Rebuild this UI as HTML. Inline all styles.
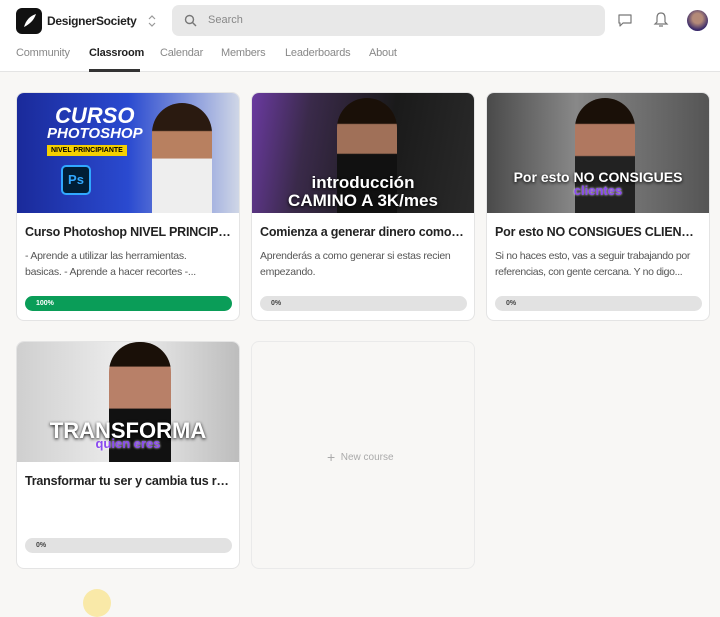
<!DOCTYPE html>
<html><head><meta charset="utf-8"><style>
*{box-sizing:border-box;margin:0;padding:0}
body{width:720px;height:598px;overflow:hidden;background:#f8f7f5;font-family:"Liberation Sans",Arial,sans-serif;position:relative}
.hdr{position:absolute;left:0;top:0;width:720px;height:72px;background:#fff;border-bottom:1px solid #e4e4e4}
.logo{position:absolute;left:16px;top:8px;width:26px;height:26px;background:#111;border-radius:6px}
.brand{position:absolute;left:47px;top:14px;font-size:12px;font-weight:bold;color:#222;letter-spacing:-0.3px}
.chev{position:absolute;left:147px;top:14px;width:10px;height:14px}
.search{position:absolute;left:172px;top:5px;width:433px;height:31px;background:#e8e8e8;border-radius:7px}
.search span{position:absolute;left:36px;top:9px;font-size:11px;color:#888}
.nav{position:absolute;top:47px;font-size:11px;color:#888;letter-spacing:-0.2px}
.nav.a{color:#222;font-weight:bold}
.ul{position:absolute;left:89px;top:69px;width:51px;height:3px;background:#333}
.card{position:absolute;width:224px;background:#fff;border:1px solid #e4e4e4;border-radius:8px;overflow:hidden}
.img{height:120px;position:relative;overflow:hidden}
.t{position:absolute;left:8px;top:132px;font-size:12.5px;font-weight:bold;color:#222;white-space:nowrap;width:206px;overflow:hidden;text-overflow:ellipsis;letter-spacing:-0.2px}
.d{position:absolute;left:8px;top:155px;font-size:10.5px;color:#555;line-height:16px;width:212px;letter-spacing:-0.25px;height:32px;overflow:hidden}
.bar{position:absolute;left:8px;top:196px;width:207px;height:15px;background:#e2e2e2;border-radius:8px;font-size:7px;font-weight:bold;color:#444;padding:4px 0 0 11px}
.bar.g{background:#0a9d58;color:#fff}
.big{position:absolute;color:#fff;font-weight:bold;text-align:center;width:100%;text-shadow:0 1px 3px #000}
</style></head><body>
<div class="hdr">
<div class="logo"><svg width="26" height="26"><path d="M8 19 C10 12 14 8 20 6 C18 12 14 16 8 19Z" fill="#fff"/></svg></div>
<div class="brand">DesignerSociety</div>
<svg class="chev" viewBox="0 0 10 14"><path d="M2 5l3-3 3 3M2 9l3 3 3-3" fill="none" stroke="#999" stroke-width="1.2"/></svg>
<div class="search"><svg style="position:absolute;left:12px;top:9px" width="13" height="13"><circle cx="5.5" cy="5.5" r="4" fill="none" stroke="#777" stroke-width="1.4"/><path d="M8.5 8.5 12 12" stroke="#777" stroke-width="1.4"/></svg><span>Search</span></div>
<svg style="position:absolute;left:617px;top:12px" width="16" height="16"><path d="M2 3h12v8H6l-3 3v-3H2z" fill="none" stroke="#777" stroke-width="1.2" stroke-linejoin="round"/></svg>
<svg style="position:absolute;left:653px;top:11px" width="16" height="18"><path d="M8 2c-3 0-4 2-4 5v4l-2 2h12l-2-2V7c0-3-1-5-4-5zM6 15h4" fill="none" stroke="#777" stroke-width="1.2"/></svg>
<div style="position:absolute;left:687px;top:10px;width:21px;height:21px;border-radius:50%;background:radial-gradient(circle at 50% 40%,#b48a78 30%,#3a2a6a 70%)"></div>
<div class="nav" style="left:16px">Community</div>
<div class="nav a" style="left:89px">Classroom</div>
<div class="nav" style="left:160px">Calendar</div>
<div class="nav" style="left:221px">Members</div>
<div class="nav" style="left:285px">Leaderboards</div>
<div class="nav" style="left:369px">About</div>
<div class="ul"></div>
</div>

<div class="card" style="left:16px;top:92px;height:229px">
<div class="img" style="background:linear-gradient(90deg,#1a2a9a,#2a4ad0 50%,#cfd6e6)">
<div style="position:absolute;left:38px;top:10px;color:#fff;font-weight:900;font-size:22px;font-style:italic">CURSO</div>
<div style="position:absolute;left:30px;top:32px;color:#fff;font-weight:900;font-size:15px;font-style:italic">PHOTOSHOP</div>
<div style="position:absolute;left:30px;top:52px;background:#f5d000;color:#000;font-size:7px;font-weight:bold;padding:2px 4px">NIVEL PRINCIPIANTE</div>
<div style="position:absolute;left:44px;top:72px;width:30px;height:30px;background:#001e36;border:2px solid #31a8ff;border-radius:5px;color:#31a8ff;font-weight:bold;font-size:13px;text-align:center;line-height:26px">Ps</div>
<div style="position:absolute;left:135px;top:10px;width:60px;height:110px;border-radius:30px 30px 0 0;background:linear-gradient(#2a1a10 25%,#b88060 26%,#b88060 50%,#eee 51%)"></div>
</div>
<div class="t">Curso Photoshop NIVEL PRINCIPIANTE</div>
<div class="d" style="width:195px">- Aprende a utilizar las herramientas. basicas. - Aprende a hacer recortes -...</div>
<div class="bar g" style="top:203px">100%</div>
</div>

<div class="card" style="left:251px;top:92px;height:229px">
<div class="img" style="background:linear-gradient(100deg,#6a3aa0,#3a2a4a 25%,#1a1a1a 60%,#2a2a2a)">
<div style="position:absolute;left:85px;top:5px;width:60px;height:115px;border-radius:30px 30px 0 0;background:linear-gradient(#1a1008 22%,#a07058 23%,#a07058 48%,#111 49%)"></div>
<div class="big" style="top:80px;font-size:17px">introducción</div>
<div class="big" style="top:98px;font-size:17px">CAMINO A 3K/mes</div>
</div>
<div class="t">Comienza a generar dinero como diseñador</div>
<div class="d">Aprenderás a como generar si estas recien empezando.</div>
<div class="bar" style="top:203px">0%</div>
</div>

<div class="card" style="left:486px;top:92px;height:229px">
<div class="img" style="background:linear-gradient(90deg,#4a4a4a,#888 40%,#555)">
<div style="position:absolute;left:88px;top:5px;width:60px;height:115px;border-radius:30px 30px 0 0;background:linear-gradient(#1a1008 22%,#b07860 23%,#b07860 50%,#222 51%)"></div>
<div class="big" style="top:76px;font-size:14px">Por esto NO CONSIGUES</div>
<div class="big" style="top:90px;font-size:13px;color:#8a4af0;text-shadow:0 0 2px #fff">clientes</div>
</div>
<div class="t">Por esto NO CONSIGUES CLIENTES</div>
<div class="d" style="letter-spacing:-0.35px">Si no haces esto, vas a seguir trabajando por referencias, con gente cercana. Y no digo...</div>
<div class="bar" style="top:203px">0%</div>
</div>

<div class="card" style="left:16px;top:341px;height:228px">
<div class="img" style="background:linear-gradient(90deg,#cfcfcf,#eee 50%,#bdbdbd)">
<div style="position:absolute;left:92px;top:0;width:62px;height:120px;border-radius:30px 30px 0 0;background:linear-gradient(#1a1008 20%,#b88068 21%,#b88068 55%,#111 56%)"></div>
<div class="big" style="top:76px;font-size:22px;font-weight:900">TRANSFORMA</div>
<div class="big" style="top:94px;font-size:13px;color:#8a4af0;text-shadow:0 0 2px #fff">quien eres</div>
</div>
<div class="t">Transformar tu ser y cambia tus resultados</div>
<div class="bar" style="top:196px">0%</div>
</div>

<div class="card" style="left:251px;top:341px;height:228px;background:#f8f7f5;border-color:#eaeaea">
<div style="position:absolute;left:75px;top:107px;font-size:10px;color:#aaa"><span style="font-size:14px;vertical-align:-2px">+</span>&nbsp; New course</div>
</div>
<div style="position:absolute;left:83px;top:589px;width:28px;height:28px;border-radius:50%;background:#f9e9a8"></div>
</body></html>
